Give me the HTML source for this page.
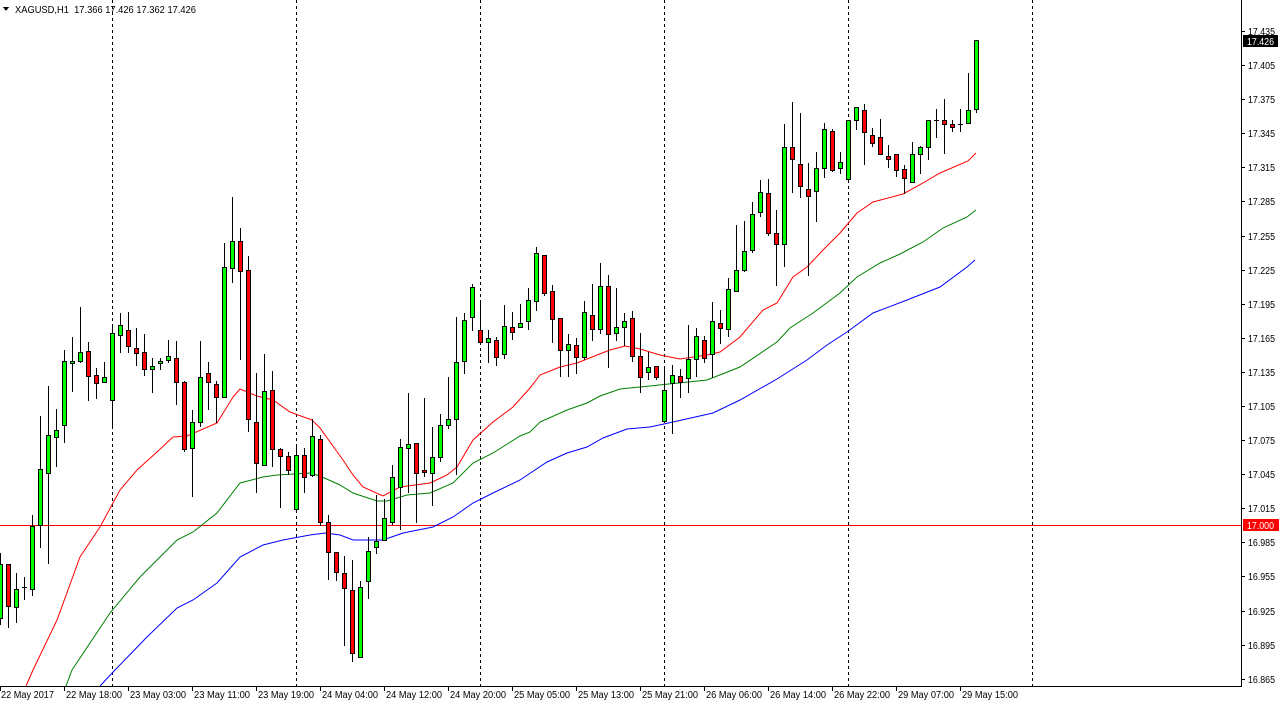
<!DOCTYPE html>
<html><head><meta charset="utf-8"><style>
html,body{margin:0;padding:0;background:#fff;width:1282px;height:706px;overflow:hidden}
svg{display:block}
text{font-family:"Liberation Sans",sans-serif;font-size:10px;fill:#000}
.g{fill:#00ff00;stroke:#000;stroke-width:1}
.r{fill:#ff0000;stroke:#000;stroke-width:1}
</style></head><body>
<svg width="1282" height="706" viewBox="0 0 1282 706" xmlns="http://www.w3.org/2000/svg" shape-rendering="crispEdges">
<rect width="1282" height="706" fill="#fff"/>
<g stroke="#000" stroke-dasharray="3,3" stroke-width="1">
<path d="M112.5 0V686M296.5 0V686M480.5 0V686M664.5 0V686M848.5 0V686M1032.5 0V686"/>
</g>
<path d="M0 525.5H1241" stroke="#ff0000" stroke-width="1"/>
<g fill="none" stroke-width="1" shape-rendering="auto">
<polyline stroke="#ff0000" points="26,686 33,670 57,620 80,557 100,527 120,490 137,470 157,452 173,437 187,436 217,423 233,397 240,389 257,396 273,400 290,412 312,420 320,428 343,460 353,475 363,487 383,496 400,487 430,483 447,475 457,467 473,440 493,422 513,407 530,388 540,375 560,367 577,363 597,355 610,350 625,346 640,349 660,355 680,359 707,355 720,352 740,337 763,310 777,303 793,277 807,267 823,250 840,233 857,213 873,202 903,194 923,183 940,173 968,161 976,153"/>
<polyline stroke="#008000" points="66,686 72,670 110,613 140,577 177,540 193,532 217,513 240,483 263,477 277,475 310,473 320,476 340,485 353,493 377,501 387,501 407,495 430,493 453,483 473,463 493,453 520,436 530,432 540,422 567,410 587,403 600,396 620,389 640,387 707,380 740,367 777,342 790,328 813,313 840,293 857,277 880,263 900,254 923,242 943,228 967,217 976,210"/>
<polyline stroke="#0000ff" points="100,686 115,670 147,637 177,608 193,600 217,583 240,557 263,545 283,540 310,535 325,533 340,535 353,540 383,540 403,533 433,527 453,517 473,503 493,493 520,480 547,462 567,453 587,447 603,438 627,429 650,427 673,422 713,413 740,400 777,379 807,360 827,345 847,332 873,313 907,300 940,287 967,267 975,260"/>
</g>
<path stroke="#000" stroke-width="1" fill="none" d="M0.5 553V625M8.5 564V628M16.5 573V623M24.5 577V600M32.5 515V596M40.5 416V548M48.5 386V564M56.5 409V467M64.5 350V443M72.5 337V392M80.5 307V363M88.5 342V401M96.5 368V399M104.5 362V382M112.5 325V428M120.5 313V353M128.5 312V353M136.5 328V366M144.5 334V376M152.5 358V393M160.5 358V370M168.5 340V363M176.5 341V405M184.5 381V452M192.5 410V497M200.5 341V427M208.5 362V410M216.5 381V423M224.5 243V397M232.5 197V283M240.5 228V360M248.5 256V432M256.5 373V493M264.5 354V465M272.5 371V467M280.5 448V508M288.5 452V475M296.5 447V513M304.5 448V493M312.5 419V477M320.5 435V526M328.5 515V580M336.5 552V581M344.5 556V646M352.5 560V662M360.5 581V657M368.5 537V599M376.5 495V554M384.5 499V540M392.5 465V525M400.5 439V530M408.5 393V493M416.5 443V523M424.5 398V477M432.5 427V506M440.5 414V462M448.5 377V429M456.5 317V475M464.5 313V374M472.5 284V331M480.5 300V344M488.5 330V363M496.5 337V366M504.5 305V359M512.5 312V340M520.5 304V327M528.5 288V330M536.5 247V311M544.5 255V296M552.5 285V343M560.5 318V377M568.5 334V377M576.5 338V374M584.5 301V360M592.5 284V341M600.5 263V334M608.5 275V368M616.5 288V341M624.5 313V346M632.5 311V362M640.5 333V393M648.5 352V380M656.5 366V380M664.5 366V421M672.5 365V434M680.5 369V398M688.5 325V393M696.5 328V377M704.5 336V363M712.5 302V378M720.5 310V344M728.5 278V337M736.5 225V291M744.5 221V272M752.5 202V253M760.5 180V217M768.5 179V236M776.5 210V286M784.5 124V267M792.5 102V193M800.5 113V198M808.5 163V276M816.5 152V222M824.5 123V178M832.5 129V172M840.5 152V174M848.5 120V183M856.5 107V130M864.5 104V165M872.5 128V147M880.5 119V154M888.5 145V168M896.5 154V177M904.5 165V194M912.5 142V182M920.5 146V174M928.5 120V160M936.5 109V138M944.5 99V154M952.5 120V132M960.5 109V132M968.5 73V123M976.5 40V113M22 587.5H27M934 120.5H939M958 124.5H963"/>
<g>
<rect class="g" x="-1.5" y="564.5" width="4" height="54"/>
<rect class="r" x="6.5" y="564.5" width="4" height="42"/>
<rect class="g" x="14.5" y="589.5" width="4" height="18"/>
<rect class="g" x="30.5" y="526.5" width="4" height="63"/>
<rect class="g" x="38.5" y="469.5" width="4" height="56"/>
<rect class="g" x="46.5" y="435.5" width="4" height="38"/>
<rect class="g" x="54.5" y="430.5" width="4" height="7"/>
<rect class="g" x="62.5" y="361.5" width="4" height="64"/>
<rect class="g" x="70.5" y="361.5" width="4" height="2"/>
<rect class="g" x="78.5" y="352.5" width="4" height="9"/>
<rect class="r" x="86.5" y="351.5" width="4" height="25"/>
<rect class="r" x="94.5" y="375.5" width="4" height="8"/>
<rect class="g" x="102.5" y="377.5" width="4" height="5"/>
<rect class="g" x="110.5" y="333.5" width="4" height="67"/>
<rect class="g" x="118.5" y="325.5" width="4" height="10"/>
<rect class="r" x="126.5" y="330.5" width="4" height="16"/>
<rect class="r" x="134.5" y="348.5" width="4" height="5"/>
<rect class="r" x="142.5" y="352.5" width="4" height="17"/>
<rect class="g" x="150.5" y="366.5" width="4" height="3"/>
<rect class="g" x="158.5" y="361.5" width="4" height="2"/>
<rect class="g" x="166.5" y="356.5" width="4" height="4"/>
<rect class="r" x="174.5" y="358.5" width="4" height="24"/>
<rect class="r" x="182.5" y="382.5" width="4" height="67"/>
<rect class="g" x="190.5" y="422.5" width="4" height="26"/>
<rect class="g" x="198.5" y="377.5" width="4" height="45"/>
<rect class="r" x="206.5" y="373.5" width="4" height="9"/>
<rect class="r" x="214.5" y="384.5" width="4" height="13"/>
<rect class="g" x="222.5" y="267.5" width="4" height="130"/>
<rect class="g" x="230.5" y="241.5" width="4" height="27"/>
<rect class="r" x="238.5" y="241.5" width="4" height="30"/>
<rect class="r" x="246.5" y="270.5" width="4" height="149"/>
<rect class="r" x="254.5" y="422.5" width="4" height="41"/>
<rect class="g" x="262.5" y="391.5" width="4" height="74"/>
<rect class="r" x="270.5" y="390.5" width="4" height="59"/>
<rect class="r" x="278.5" y="449.5" width="4" height="7"/>
<rect class="r" x="286.5" y="456.5" width="4" height="14"/>
<rect class="g" x="294.5" y="455.5" width="4" height="54"/>
<rect class="r" x="302.5" y="455.5" width="4" height="22"/>
<rect class="g" x="310.5" y="436.5" width="4" height="39"/>
<rect class="r" x="318.5" y="439.5" width="4" height="83"/>
<rect class="r" x="326.5" y="522.5" width="4" height="30"/>
<rect class="r" x="334.5" y="552.5" width="4" height="20"/>
<rect class="r" x="342.5" y="573.5" width="4" height="15"/>
<rect class="r" x="350.5" y="590.5" width="4" height="63"/>
<rect class="g" x="358.5" y="587.5" width="4" height="70"/>
<rect class="g" x="366.5" y="551.5" width="4" height="30"/>
<rect class="g" x="374.5" y="541.5" width="4" height="6"/>
<rect class="g" x="382.5" y="518.5" width="4" height="22"/>
<rect class="g" x="390.5" y="477.5" width="4" height="45"/>
<rect class="g" x="398.5" y="447.5" width="4" height="40"/>
<rect class="g" x="406.5" y="444.5" width="4" height="4"/>
<rect class="r" x="414.5" y="443.5" width="4" height="30"/>
<rect class="r" x="422.5" y="470.5" width="4" height="2"/>
<rect class="g" x="430.5" y="457.5" width="4" height="16"/>
<rect class="g" x="438.5" y="425.5" width="4" height="32"/>
<rect class="g" x="446.5" y="419.5" width="4" height="6"/>
<rect class="g" x="454.5" y="362.5" width="4" height="57"/>
<rect class="g" x="462.5" y="320.5" width="4" height="41"/>
<rect class="g" x="470.5" y="287.5" width="4" height="30"/>
<rect class="r" x="478.5" y="330.5" width="4" height="12"/>
<rect class="g" x="486.5" y="338.5" width="4" height="4"/>
<rect class="r" x="494.5" y="340.5" width="4" height="17"/>
<rect class="g" x="502.5" y="326.5" width="4" height="28"/>
<rect class="r" x="510.5" y="327.5" width="4" height="5"/>
<rect class="g" x="518.5" y="323.5" width="4" height="4"/>
<rect class="g" x="526.5" y="300.5" width="4" height="21"/>
<rect class="g" x="534.5" y="253.5" width="4" height="48"/>
<rect class="r" x="542.5" y="255.5" width="4" height="38"/>
<rect class="r" x="550.5" y="291.5" width="4" height="28"/>
<rect class="r" x="558.5" y="318.5" width="4" height="32"/>
<rect class="g" x="566.5" y="344.5" width="4" height="6"/>
<rect class="r" x="574.5" y="345.5" width="4" height="12"/>
<rect class="g" x="582.5" y="312.5" width="4" height="45"/>
<rect class="r" x="590.5" y="315.5" width="4" height="14"/>
<rect class="g" x="598.5" y="286.5" width="4" height="43"/>
<rect class="r" x="606.5" y="286.5" width="4" height="48"/>
<rect class="g" x="614.5" y="327.5" width="4" height="6"/>
<rect class="g" x="622.5" y="321.5" width="4" height="6"/>
<rect class="r" x="630.5" y="318.5" width="4" height="38"/>
<rect class="r" x="638.5" y="356.5" width="4" height="21"/>
<rect class="g" x="646.5" y="367.5" width="4" height="5"/>
<rect class="r" x="654.5" y="366.5" width="4" height="11"/>
<rect class="g" x="662.5" y="390.5" width="4" height="31"/>
<rect class="g" x="670.5" y="375.5" width="4" height="8"/>
<rect class="r" x="678.5" y="376.5" width="4" height="6"/>
<rect class="g" x="686.5" y="359.5" width="4" height="19"/>
<rect class="g" x="694.5" y="336.5" width="4" height="23"/>
<rect class="r" x="702.5" y="340.5" width="4" height="18"/>
<rect class="g" x="710.5" y="321.5" width="4" height="33"/>
<rect class="r" x="718.5" y="323.5" width="4" height="5"/>
<rect class="g" x="726.5" y="289.5" width="4" height="40"/>
<rect class="g" x="734.5" y="270.5" width="4" height="21"/>
<rect class="g" x="742.5" y="251.5" width="4" height="19"/>
<rect class="g" x="750.5" y="214.5" width="4" height="36"/>
<rect class="g" x="758.5" y="192.5" width="4" height="20"/>
<rect class="r" x="766.5" y="193.5" width="4" height="40"/>
<rect class="r" x="774.5" y="233.5" width="4" height="11"/>
<rect class="g" x="782.5" y="147.5" width="4" height="97"/>
<rect class="r" x="790.5" y="147.5" width="4" height="12"/>
<rect class="r" x="798.5" y="164.5" width="4" height="22"/>
<rect class="r" x="806.5" y="189.5" width="4" height="7"/>
<rect class="g" x="814.5" y="168.5" width="4" height="23"/>
<rect class="g" x="822.5" y="129.5" width="4" height="39"/>
<rect class="r" x="830.5" y="131.5" width="4" height="39"/>
<rect class="g" x="838.5" y="162.5" width="4" height="6"/>
<rect class="g" x="846.5" y="120.5" width="4" height="59"/>
<rect class="g" x="854.5" y="107.5" width="4" height="13"/>
<rect class="r" x="862.5" y="110.5" width="4" height="22"/>
<rect class="r" x="870.5" y="135.5" width="4" height="8"/>
<rect class="r" x="878.5" y="137.5" width="4" height="17"/>
<rect class="r" x="886.5" y="156.5" width="4" height="3"/>
<rect class="r" x="894.5" y="154.5" width="4" height="16"/>
<rect class="r" x="902.5" y="169.5" width="4" height="9"/>
<rect class="g" x="910.5" y="154.5" width="4" height="28"/>
<rect class="g" x="918.5" y="147.5" width="4" height="7"/>
<rect class="g" x="926.5" y="120.5" width="4" height="27"/>
<rect class="r" x="942.5" y="120.5" width="4" height="4"/>
<rect class="r" x="950.5" y="124.5" width="4" height="3"/>
<rect class="g" x="966.5" y="110.5" width="4" height="13"/>
<rect class="g" x="974.5" y="40.5" width="4" height="69"/>
</g>
<path d="M1241.5 0V686.5H0" stroke="#000" fill="none"/>
<path stroke="#000" d="M1241 31.5h4M1241 65.5h4M1241 99.5h4M1241 133.5h4M1241 167.5h4M1241 201.5h4M1241 236.5h4M1241 270.5h4M1241 304.5h4M1241 338.5h4M1241 372.5h4M1241 406.5h4M1241 440.5h4M1241 474.5h4M1241 508.5h4M1241 542.5h4M1241 576.5h4M1241 611.5h4M1241 645.5h4M1241 679.5h4M0.5 686v5M64.5 686v5M128.5 686v5M192.5 686v5M256.5 686v5M320.5 686v5M384.5 686v5M448.5 686v5M512.5 686v5M576.5 686v5M640.5 686v5M704.5 686v5M768.5 686v5M832.5 686v5M896.5 686v5M960.5 686v5"/>
<g lengthAdjust="spacingAndGlyphs">
<text x="1248" y="35" textLength="27" lengthAdjust="spacingAndGlyphs">17.435</text>
<text x="1248" y="69" textLength="27" lengthAdjust="spacingAndGlyphs">17.405</text>
<text x="1248" y="103" textLength="27" lengthAdjust="spacingAndGlyphs">17.375</text>
<text x="1248" y="137" textLength="27" lengthAdjust="spacingAndGlyphs">17.345</text>
<text x="1248" y="171" textLength="27" lengthAdjust="spacingAndGlyphs">17.315</text>
<text x="1248" y="205" textLength="27" lengthAdjust="spacingAndGlyphs">17.285</text>
<text x="1248" y="240" textLength="27" lengthAdjust="spacingAndGlyphs">17.255</text>
<text x="1248" y="274" textLength="27" lengthAdjust="spacingAndGlyphs">17.225</text>
<text x="1248" y="308" textLength="27" lengthAdjust="spacingAndGlyphs">17.195</text>
<text x="1248" y="342" textLength="27" lengthAdjust="spacingAndGlyphs">17.165</text>
<text x="1248" y="376" textLength="27" lengthAdjust="spacingAndGlyphs">17.135</text>
<text x="1248" y="410" textLength="27" lengthAdjust="spacingAndGlyphs">17.105</text>
<text x="1248" y="444" textLength="27" lengthAdjust="spacingAndGlyphs">17.075</text>
<text x="1248" y="478" textLength="27" lengthAdjust="spacingAndGlyphs">17.045</text>
<text x="1248" y="512" textLength="27" lengthAdjust="spacingAndGlyphs">17.015</text>
<text x="1248" y="546" textLength="27" lengthAdjust="spacingAndGlyphs">16.985</text>
<text x="1248" y="580" textLength="27" lengthAdjust="spacingAndGlyphs">16.955</text>
<text x="1248" y="615" textLength="27" lengthAdjust="spacingAndGlyphs">16.925</text>
<text x="1248" y="649" textLength="27" lengthAdjust="spacingAndGlyphs">16.895</text>
<text x="1248" y="683" textLength="27" lengthAdjust="spacingAndGlyphs">16.865</text>
</g>
<rect x="1243" y="35" width="35" height="12" fill="#000"/>
<text x="1247" y="45" textLength="27" lengthAdjust="spacingAndGlyphs" style="fill:#fff">17.426</text>
<rect x="1243" y="519" width="36" height="12" fill="#ff0000"/>
<text x="1247" y="529" textLength="27" lengthAdjust="spacingAndGlyphs" style="fill:#fff">17.000</text>
<g>
<text x="1" y="698" textLength="53" lengthAdjust="spacingAndGlyphs">22 May 2017</text>
<text x="66" y="698" textLength="56" lengthAdjust="spacingAndGlyphs">22 May 18:00</text>
<text x="130" y="698" textLength="56" lengthAdjust="spacingAndGlyphs">23 May 03:00</text>
<text x="194" y="698" textLength="56" lengthAdjust="spacingAndGlyphs">23 May 11:00</text>
<text x="258" y="698" textLength="56" lengthAdjust="spacingAndGlyphs">23 May 19:00</text>
<text x="322" y="698" textLength="56" lengthAdjust="spacingAndGlyphs">24 May 04:00</text>
<text x="386" y="698" textLength="56" lengthAdjust="spacingAndGlyphs">24 May 12:00</text>
<text x="450" y="698" textLength="56" lengthAdjust="spacingAndGlyphs">24 May 20:00</text>
<text x="514" y="698" textLength="56" lengthAdjust="spacingAndGlyphs">25 May 05:00</text>
<text x="578" y="698" textLength="56" lengthAdjust="spacingAndGlyphs">25 May 13:00</text>
<text x="642" y="698" textLength="56" lengthAdjust="spacingAndGlyphs">25 May 21:00</text>
<text x="706" y="698" textLength="56" lengthAdjust="spacingAndGlyphs">26 May 06:00</text>
<text x="770" y="698" textLength="56" lengthAdjust="spacingAndGlyphs">26 May 14:00</text>
<text x="834" y="698" textLength="56" lengthAdjust="spacingAndGlyphs">26 May 22:00</text>
<text x="898" y="698" textLength="56" lengthAdjust="spacingAndGlyphs">29 May 07:00</text>
<text x="962" y="698" textLength="56" lengthAdjust="spacingAndGlyphs">29 May 15:00</text>
</g>
<path d="M3 7H9L6 11Z" fill="#000"/>
<text x="15" y="13" textLength="181" lengthAdjust="spacingAndGlyphs" xml:space="preserve">XAGUSD,H1  17.366 17.426 17.362 17.426</text>
</svg>
</body></html>
